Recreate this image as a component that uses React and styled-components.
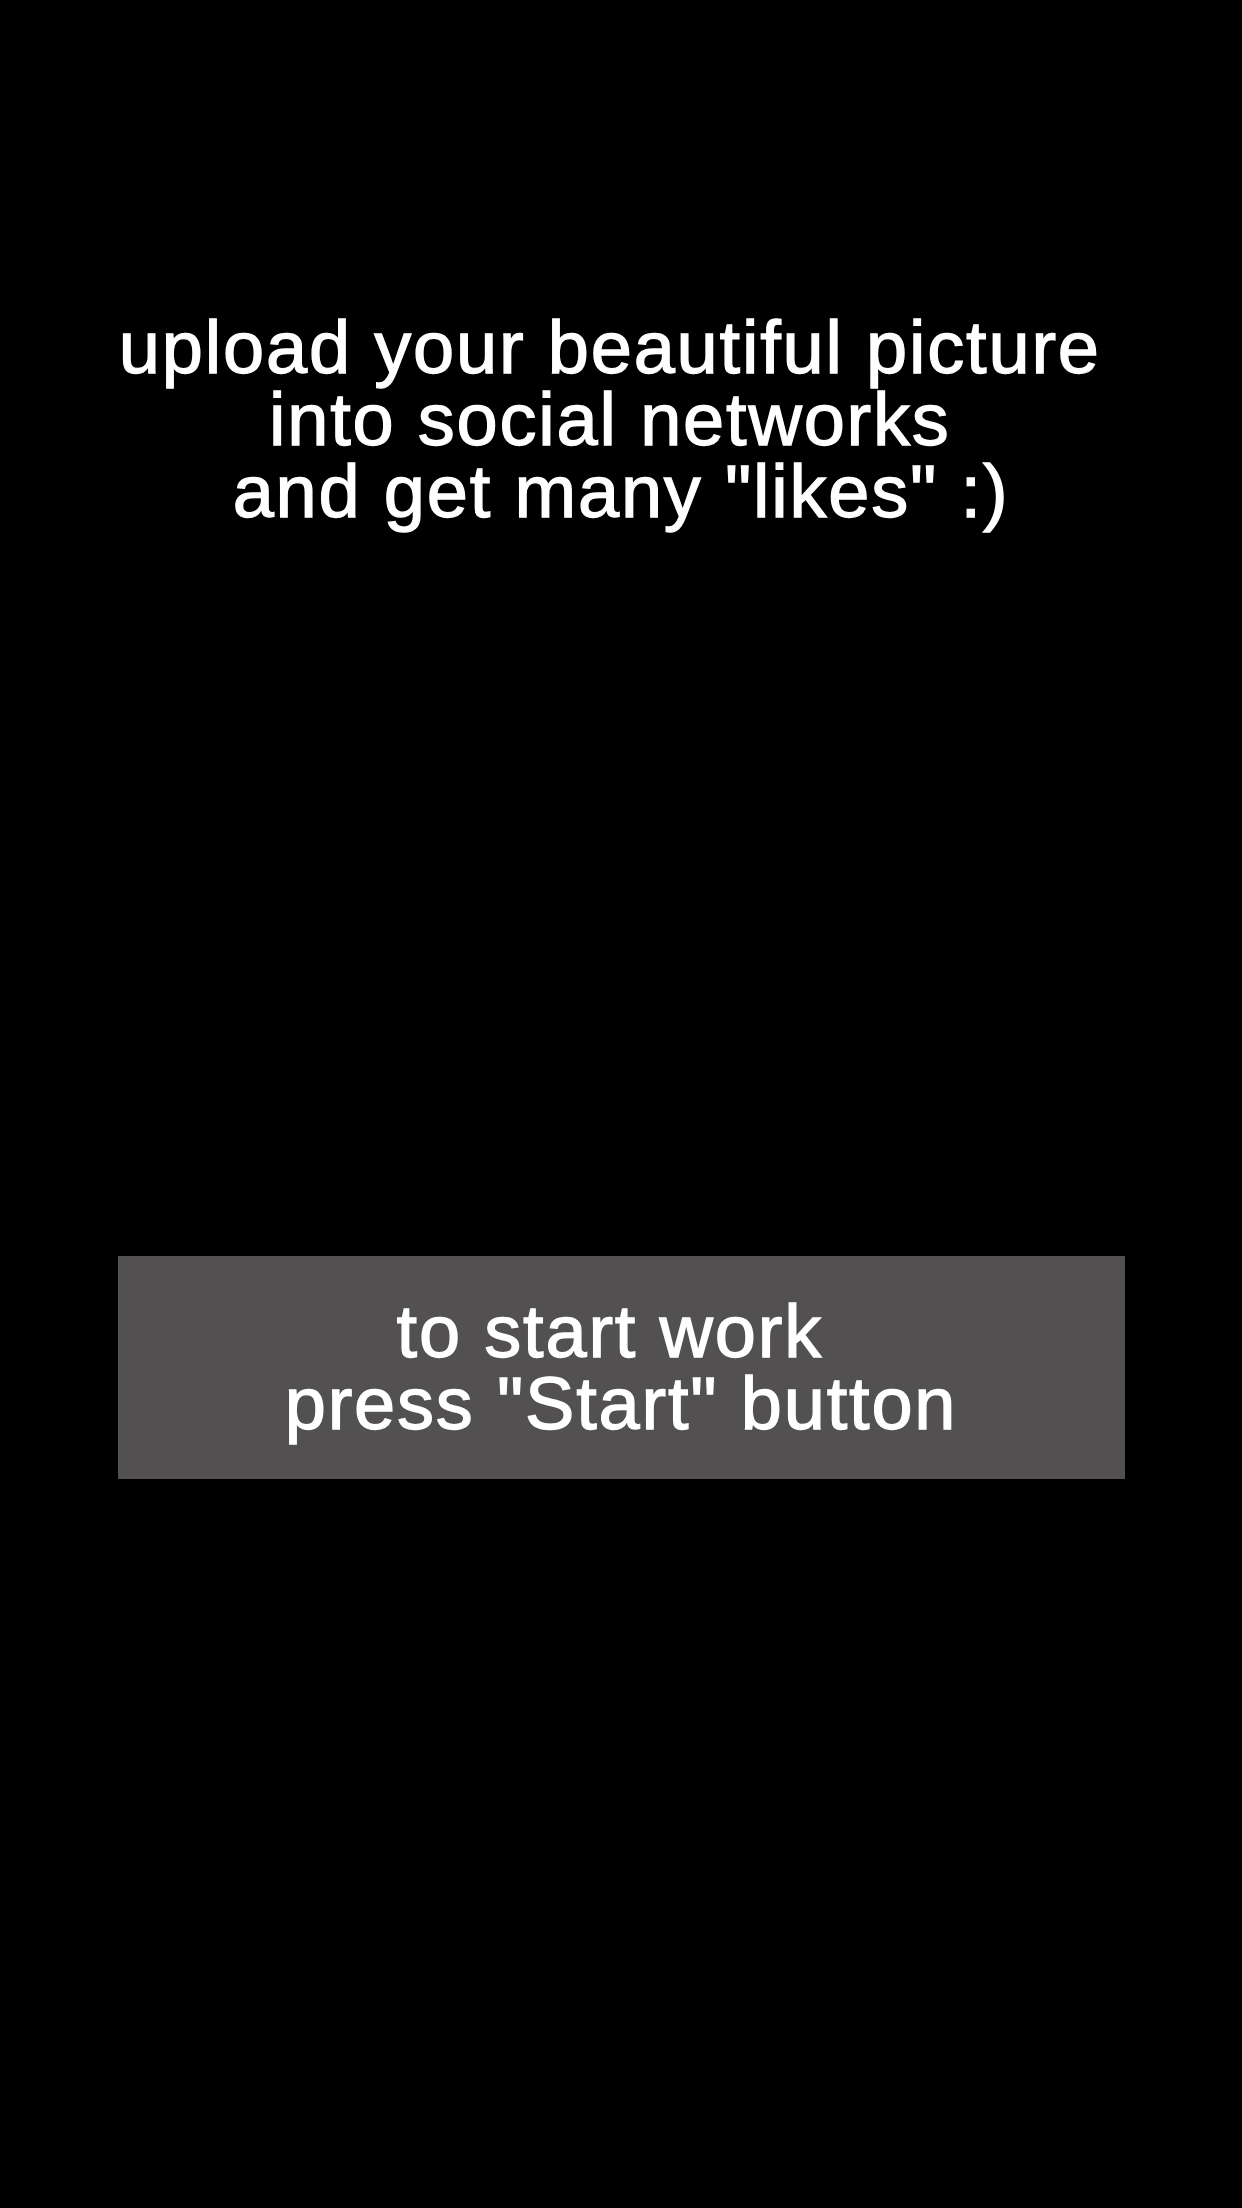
import React from "react";
import styled, { createGlobalStyle } from "styled-components";

const Global = createGlobalStyle`
  html, body {
    margin: 0;
    padding: 0;
    background: #000;
  }
  body {
    font-family: "Liberation Sans", Arial, sans-serif;
    color: #fff;
  }
`;

const Page = styled.main`
  width: 1242px;
  height: 2208px;
  background: #000;
  display: flex;
  flex-direction: column;
  align-items: center;
  padding-top: 312px;
  box-sizing: border-box;
`;

const Heading = styled.h1`
  margin: 0;
  font-size: 74px;
  font-weight: 400;
  line-height: 72px;
  letter-spacing: 1.8px;
  -webkit-text-stroke: 1.3px #fff;
  text-align: center;
  color: #fff;
`;

const StartPanel = styled.div`
  margin-top: 728px;
  width: 1007px;
  height: 223px;
  background: #525051;
  display: flex;
  align-items: center;
  justify-content: center;
`;

const PanelText = styled.p`
  margin: 0;
  font-size: 74px;
  line-height: 72px;
  letter-spacing: 1.8px;
  -webkit-text-stroke: 1.3px #fff;
  text-align: center;
  color: #fff;
`;

export default function App() {
  return (
    <>
      <Global />
      <Page>
        <Heading>
          upload your beautiful picture{"\u00a0"}
          <br />
          into social networks{"\u00a0"}
          <br />
          and get many "likes" :)
        </Heading>
        <StartPanel>
          <PanelText>
            to start work{"\u00a0"}
            <br />
            press "Start" button
          </PanelText>
        </StartPanel>
      </Page>
    </>
  );
}
